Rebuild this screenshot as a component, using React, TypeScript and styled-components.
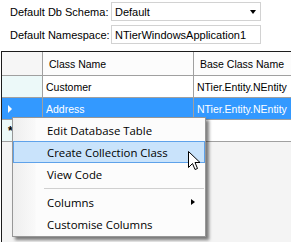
import React from 'react';
import styled, { createGlobalStyle } from 'styled-components';

const GlobalStyle = createGlobalStyle`
  html, body {
    margin: 0;
    padding: 0;
    background: #fff;
  }
  body {
    font-family: 'Liberation Sans', Arial, sans-serif;
    font-size: 11px;
    color: #000;
  }
`;

type Row = { name: string; base: string; selected?: boolean };

const rows: Row[] = [
  { name: 'Customer', base: 'NTier.Entity.NEntity' },
  { name: 'Address', base: 'NTier.Entity.NEntity', selected: true },
];

const menuItems = [
  { label: 'Edit Database Table' },
  { label: 'Create Collection Class', hover: true },
  { label: 'View Code' },
  { separator: true },
  { label: 'Columns', sub: true },
  { label: 'Customise Columns' },
];

const App = () => {
  return (
    <>
      <GlobalStyle />
      <Page>
        <Form>
          <Label>Default Db Schema:</Label>
          <Combo>
            <span>Default</span>
            <DropArrow />
          </Combo>
          <Label>Default Namespace:</Label>
          <TextBox>NTierWindowsApplication1</TextBox>
        </Form>

        <Grid>
          <GridRow>
            <HeaderCorner />
            <HeaderCell width={151}>Class Name</HeaderCell>
            <HeaderCell width={200}>Base Class Name</HeaderCell>
          </GridRow>
          {rows.map((row) => (
            <GridRow key={row.name}>
              <RowHeader selected={row.selected ? 1 : 0}>
                {row.selected && <CurrentArrow />}
              </RowHeader>
              <Cell width={151} selected={row.selected ? 1 : 0}>
                {row.name}
              </Cell>
              <Cell width={200} selected={row.selected ? 1 : 0}>
                {row.base}
              </Cell>
            </GridRow>
          ))}
          <GridRow>
            <RowHeader selected={0}>
              <NewRowMark>*</NewRowMark>
            </RowHeader>
            <Cell width={151} selected={0} />
            <Cell width={200} selected={0} />
          </GridRow>
        </Grid>

        <Menu>
          {menuItems.map((item, i) =>
            item.separator ? (
              <Separator key={i} />
            ) : (
              <MenuItem key={i} hover={item.hover ? 1 : 0}>
                <span>{item.label}</span>
                {item.sub && <SubArrow />}
              </MenuItem>
            )
          )}
        </Menu>

        <Cursor width="13" height="21" viewBox="0 0 13 21">
          <path
            d="M0.5 0.5 L0.5 16.5 L4.5 12.5 L7 18.5 L9.5 17.5 L7 11.5 L12 11.5 Z"
            fill="#fff"
            stroke="#000"
            strokeWidth="1"
            strokeLinejoin="miter"
          />
        </Cursor>
      </Page>
    </>
  );
};

export default App;

const Page = styled.div`
  position: relative;
  display: flex;
  flex-direction: column;
  width: 291px;
  height: 242px;
  overflow: hidden;
`;

const Form = styled.div`
  display: grid;
  grid-template-columns: 101px 150px;
  grid-auto-rows: 19px;
  row-gap: 4px;
  align-items: center;
  padding: 2px 0 0 10px;
`;

const Label = styled.span`
  white-space: nowrap;
`;

const Field = styled.div`
  box-sizing: border-box;
  height: 19px;
  display: flex;
  align-items: center;
  padding-left: 3px;
  border: 1px solid #d2d2d2;
  background: #fff;
  white-space: nowrap;
`;

const Combo = styled(Field)`
  justify-content: space-between;
  padding-right: 4px;
`;

const TextBox = styled(Field)``;

const DropArrow = styled.span`
  width: 0;
  height: 0;
  border-left: 3.5px solid transparent;
  border-right: 3.5px solid transparent;
  border-top: 4px solid #000;
`;

const Grid = styled.div`
  flex: 1;
  margin: 7px 0 0 1px;
  border-top: 1px solid #1c1c1c;
  border-left: 1px solid #1c1c1c;
  background: #f4f4f4;
  display: flex;
  flex-direction: column;
  font-size: 10.5px;
`;

const GridRow = styled.div`
  display: flex;
  height: 22px;

  &:first-child {
    height: 24px;
  }
`;

const CellBase = styled.div<{ width?: number }>`
  box-sizing: border-box;
  flex: none;
  width: ${(p) => p.width ?? 41}px;
  height: 100%;
  display: flex;
  align-items: center;
  border-right: 1px solid #a0a0a0;
  border-bottom: 1px solid #a0a0a0;
  white-space: nowrap;
  overflow: hidden;
`;

const HeaderCorner = styled(CellBase)`
  background: #f6f6f6;
`;

const HeaderCell = styled(CellBase)`
  padding-left: 6px;
  background: #fcfcfc;
`;

const RowHeader = styled(CellBase)<{ selected: number }>`
  position: relative;
  background: ${(p) => (p.selected ? '#3399ff' : '#ecf9f9')};
`;

const Cell = styled(CellBase)<{ selected: number }>`
  padding-left: 3px;
  background: ${(p) => (p.selected ? '#3399ff' : '#fff')};
  color: ${(p) => (p.selected ? '#fff' : '#000')};
`;

const CurrentArrow = styled.span`
  margin-left: 6px;
  width: 0;
  height: 0;
  border-top: 4px solid transparent;
  border-bottom: 4px solid transparent;
  border-left: 4px solid #fff;
`;

const NewRowMark = styled.span`
  margin-left: 6px;
  font-size: 12px;
  font-weight: bold;
`;

const Menu = styled.div`
  position: absolute;
  left: 12px;
  top: 117px;
  box-sizing: border-box;
  width: 194px;
  height: 120px;
  padding: 1px 0;
  border: 1px solid #979797;
  background: linear-gradient(to right, #eeeeee 0, #f9f9f9 22px, #fcfcfc 23px);
  box-shadow: 3px 3px 3px rgba(0, 0, 0, 0.5);
  font-family: 'Open Sans', 'Noto Sans', sans-serif;
  font-size: 11.4px;
`;

const MenuItem = styled.div<{ hover: number }>`
  box-sizing: border-box;
  height: 22px;
  display: flex;
  align-items: center;
  justify-content: space-between;
  padding: 0 9px 0 33px;
  border: 1px solid ${(p) => (p.hover ? '#5ea2ea' : 'transparent')};
  background: ${(p) => (p.hover ? '#c9e3fb' : 'transparent')};
  color: #000;
`;

const SubArrow = styled.span`
  width: 0;
  height: 0;
  border-top: 3.5px solid transparent;
  border-bottom: 3.5px solid transparent;
  border-left: 4px solid #000;
`;

const Separator = styled.div`
  height: 6px;
  margin-left: 31px;
  margin-right: 1px;
  display: flex;
  align-items: center;

  &::after {
    content: '';
    flex: 1;
    height: 1px;
    margin-top: 1px;
    background: #d0d0d0;
  }
`;

const Cursor = styled.svg`
  position: absolute;
  left: 188px;
  top: 151px;
`;
